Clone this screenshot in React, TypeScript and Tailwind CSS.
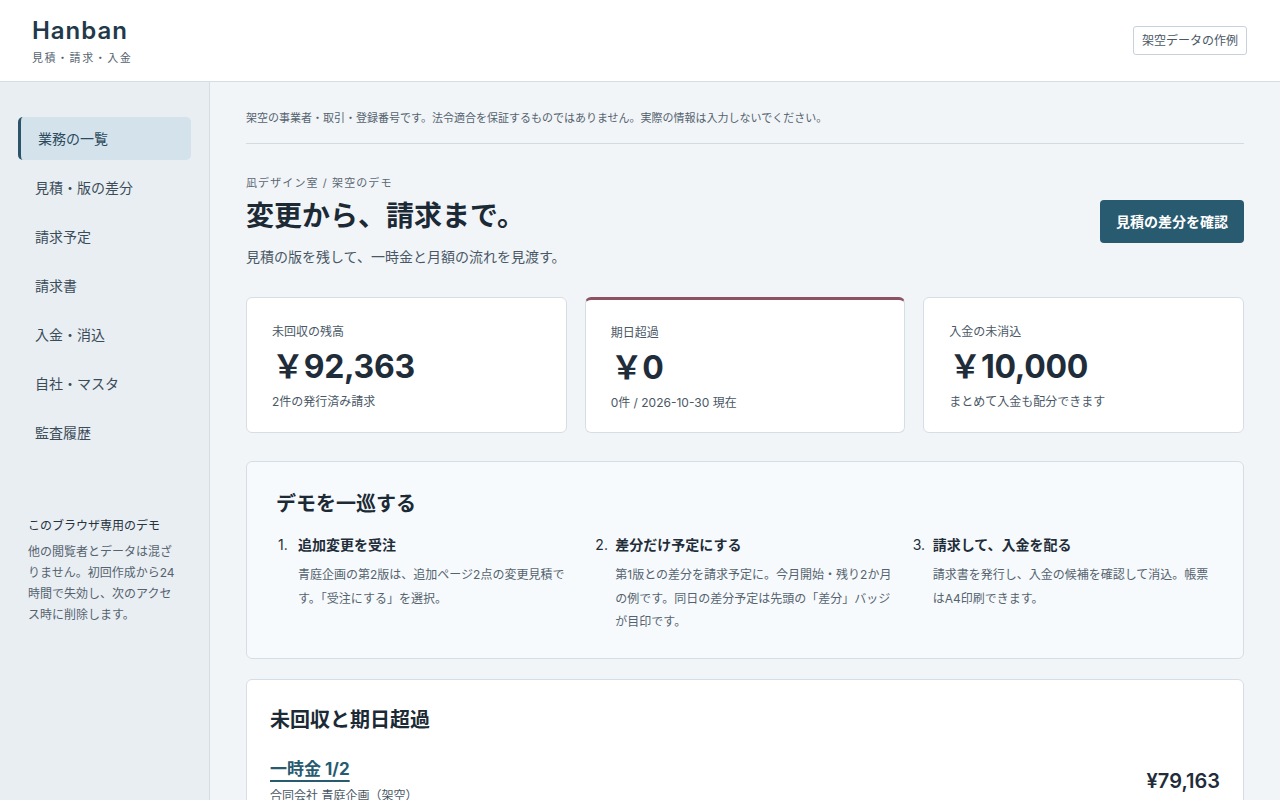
import React from "react";

const navItems = [
  "業務の一覧",
  "見積・版の差分",
  "請求予定",
  "請求書",
  "入金・消込",
  "自社・マスタ",
  "監査履歴",
];

const stats = [
  { label: "未回収の残高", value: "￥92,363", sub: "2件の発行済み請求", alert: false },
  { label: "期日超過", value: "￥0", sub: "0件 / 2026-10-30 現在", alert: true },
  { label: "入金の未消込", value: "￥10,000", sub: "まとめて入金も配分できます", alert: false },
];

const steps = [
  {
    title: "追加変更を受注",
    body: "青庭企画の第2版は、追加ページ2点の変更見積です。「受注にする」を選択。",
  },
  {
    title: "差分だけ予定にする",
    body: "第1版との差分を請求予定に。今月開始・残り2か月の例です。同日の差分予定は先頭の「差分」バッジが目印です。",
  },
  {
    title: "請求して、入金を配る",
    body: "請求書を発行し、入金の候補を確認して消込。帳票はA4印刷できます。",
  },
];

export default function App() {
  return (
    <div
      className="min-h-screen bg-[#f1f5f8] text-[#1f2d3a]"
      style={{ fontFamily: 'Inter, "Noto Sans CJK JP", sans-serif' }}
    >
      {/* Header */}
      <header className="h-[82px] bg-white border-b border-[#d6dee5] flex items-center justify-between pl-[32px] pr-[33px]">
        <div>
          <div className="text-[24px] leading-[30px] font-semibold tracking-[0.04em] text-[#22394a]">
            Hanban
          </div>
          <div className="mt-[5px] text-[11px] leading-[14px] tracking-[0.14em] text-[#55636f]">
            見積・請求・入金
          </div>
        </div>
        <button className="h-[29px] px-[8px] border border-[#c9d2da] rounded-[3px] bg-white text-[12px] text-[#4a5866]">
          架空データの作例
        </button>
      </header>

      <div className="flex">
        {/* Sidebar */}
        <aside className="w-[210px] shrink-0 bg-[#e9eef3] border-r border-[#d6dee5] min-h-[718px]">
          <nav className="pt-[35px] px-[18px] flex flex-col gap-[6px]">
            {navItems.map((item, i) =>
              i === 0 ? (
                <div
                  key={item}
                  className="h-[43px] flex items-center pl-[17px] border-l-[3px] border-[#2b5468] bg-[#d3e2eb] rounded-[5px] text-[14px] text-[#2b4a5e]"
                >
                  {item}
                </div>
              ) : (
                <div
                  key={item}
                  className="h-[43px] flex items-center pl-[17px] text-[14px] text-[#3b4c59]"
                >
                  {item}
                </div>
              )
            )}
          </nav>
          <div className="mt-[63px] px-[28px]">
            <div className="text-[12px] leading-[18px] text-[#26323d]">このブラウザ専用のデモ</div>
            <p className="mt-[6px] text-[12px] leading-[21px] text-[#55636f]">
              他の閲覧者とデータは混ざりません。初回作成から24時間で失効し、次のアクセス時に削除します。
            </p>
          </div>
        </aside>

        {/* Main */}
        <main className="flex-1 px-[36px]">
          <div className="pt-[28px] pb-[17px] border-b border-[#d3dbe2] text-[11px] leading-[16px] text-[#55636f]">
            架空の事業者・取引・登録番号です。法令適合を保証するものではありません。実際の情報は入力しないでください。
          </div>

          <section className="mt-[32px] flex items-center justify-between">
            <div>
              <div className="text-[11px] leading-[14px] tracking-[0.1em] text-[#5b6874]">
                凪デザイン室 / 架空のデモ
              </div>
              <h1 className="mt-[7px] text-[28px] leading-[38px] font-bold text-[#1c2a36]">
                変更から、請求まで。
              </h1>
              <p className="mt-[12px] text-[14px] leading-[20px] text-[#4a5866]">
                見積の版を残して、一時金と月額の流れを見渡す。
              </p>
            </div>
            <button className="h-[43px] px-[16px] rounded-[4px] bg-[#285a70] text-white text-[14px] font-bold">
              見積の差分を確認
            </button>
          </section>

          <section className="mt-[30px] grid grid-cols-3 gap-[18px]">
            {stats.map((s) => (
              <div
                key={s.label}
                className={
                  s.alert
                    ? "bg-white border border-[#d6dee5] border-t-[3px] border-t-[#8c5264] rounded-[6px] px-[25px] pt-[25px] pb-[21px]"
                    : "bg-white border border-[#d6dee5] rounded-[6px] px-[25px] pt-[26px] pb-[22px]"
                }
              >
                <div className="text-[12px] leading-[16px] text-[#4a5866]">{s.label}</div>
                <div className="mt-[7px] text-[32px] leading-[40px] font-bold tracking-[-0.01em] text-[#1f2d3a]">
                  {s.value}
                </div>
                <div className="mt-[7px] text-[12px] leading-[16px] text-[#4a5866]">{s.sub}</div>
              </div>
            ))}
          </section>

          <section className="mt-[28px] bg-[#f7fafc] border border-[#d6dee5] rounded-[6px] px-[29px] pt-[28px] pb-[24px]">
            <h2 className="text-[20px] leading-[28px] font-bold text-[#1c2a36]">デモを一巡する</h2>
            <ol className="mt-[17px] grid grid-cols-3 gap-[14px]">
              {steps.map((st, i) => (
                <li key={st.title} className="flex">
                  <span className="w-[22px] shrink-0 pl-[2px] text-[14px] leading-[20px] text-[#1f2d3a]">
                    {i + 1}.
                  </span>
                  <div>
                    <div className="text-[14px] leading-[20px] font-bold text-[#1f2d3a]">{st.title}</div>
                    <p className="mt-[8px] text-[12px] leading-[23.5px] text-[#55636f]">{st.body}</p>
                  </div>
                </li>
              ))}
            </ol>
          </section>

          <section className="mt-[20px] mb-[40px] bg-white border border-[#d6dee5] rounded-[6px] px-[23px] pt-[26px] pb-[24px]">
            <h2 className="text-[20px] leading-[28px] font-bold text-[#1c2a36]">未回収と期日超過</h2>
            <div className="mt-[23px] flex items-center justify-between">
              <div>
                <a className="text-[17px] leading-[24px] font-bold text-[#285a70] underline underline-offset-[5px] decoration-[1.5px]">
                  一時金 1/2
                </a>
                <div className="mt-[7px] text-[12px] leading-[16px] text-[#4a5866]">
                  合同会社 青庭企画（架空）
                </div>
              </div>
              <div className="mt-[2px] text-[20px] leading-[28px] font-semibold text-[#1f2d3a]">¥79,163</div>
            </div>
          </section>
        </main>
      </div>
    </div>
  );
}
